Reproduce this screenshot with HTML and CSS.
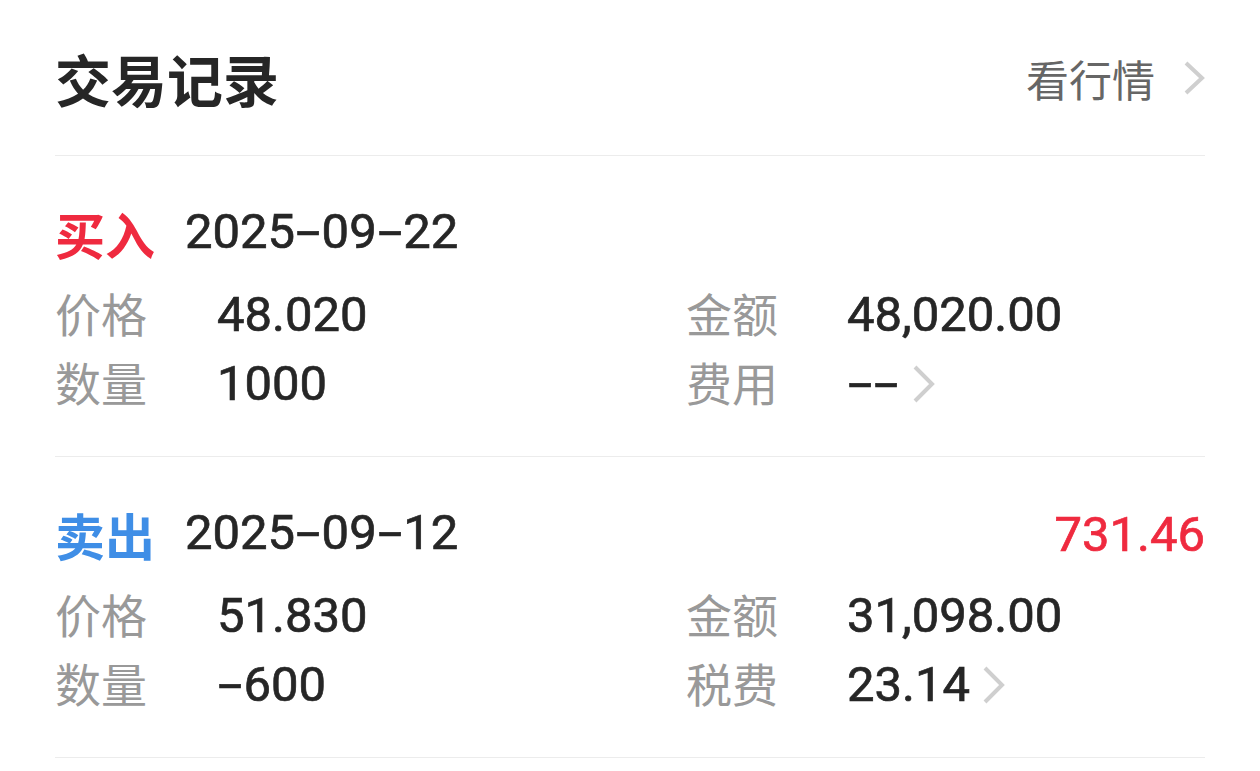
FILE: index.html
```html
<!DOCTYPE html>
<html lang="zh-CN">
<head>
    <meta charset="UTF-8">
    <title>交易记录</title>
    <link rel="stylesheet" href="styles.css">
</head>
<body>
    <div class="page">
        <div class="header">
            <h1 class="title">交易记录</h1>
            <a class="more">看行情
                <svg class="chev chev-head" viewBox="0 0 22 36"><path d="M3 3 L19 18 L3 33" /></svg>
            </a>
        </div>

        <div class="record">
            <div class="record-head">
                <span class="type buy">买入</span>
                <span class="date">2025<span class="dash">-</span>09<span class="dash">-</span>22</span>
            </div>
            <div class="fields">
                <span class="label">价格</span>
                <span class="value">48.020</span>
                <span class="label">金额</span>
                <span class="value">48,020.00</span>
                <span class="label">数量</span>
                <span class="value">1000</span>
                <span class="label">费用</span>
                <span class="value"><span class="dash">-</span><span class="dash">-</span><svg class="chev" viewBox="0 0 24 40"><path d="M3 3 L20 20 L3 37" /></svg></span>
            </div>
        </div>

        <div class="record">
            <div class="record-head">
                <span class="type sell">卖出</span>
                <span class="date">2025<span class="dash">-</span>09<span class="dash">-</span>12</span>
                <span class="profit">731.46</span>
            </div>
            <div class="fields">
                <span class="label">价格</span>
                <span class="value">51.830</span>
                <span class="label">金额</span>
                <span class="value">31,098.00</span>
                <span class="label">数量</span>
                <span class="value"><span class="dash">-</span>600</span>
                <span class="label">税费</span>
                <span class="value">23.14<svg class="chev" viewBox="0 0 24 40"><path d="M3 3 L20 20 L3 37" /></svg></span>
            </div>
        </div>
    </div>
</body>
</html>
```

FILE: styles.css
```css
body {
    margin: 0;
    padding: 0;
    background: #fff;
    font-family: Roboto, "Noto Sans CJK SC", sans-serif;
    color: #262626;
}
.page {
    padding: 0 55px;
}
.header {
    height: 155px;
    border-bottom: 1px solid #ececec;
    display: flex;
    align-items: center;
    justify-content: space-between;
}
.title {
    margin: 0;
    font-family: "Noto Sans CJK SC", sans-serif;
    font-size: 56px;
    font-weight: 700;
    color: #262626;
    line-height: 1;
}
.more {
    display: flex;
    align-items: center;
    font-family: "Noto Sans CJK SC", sans-serif;
    font-size: 43px;
    color: #666;
}
.chev {
    fill: none;
    stroke: #cfcfcf;
    stroke-width: 4;
}
.chev-head {
    width: 22px;
    height: 36px;
    margin-left: 28px;
}
.record {
    padding: 47px 0 38px;
    border-bottom: 1px solid #ececec;
}
.record-head {
    height: 60px;
    display: flex;
    align-items: center;
}
.type {
    font-family: "Noto Sans CJK SC", sans-serif;
    font-size: 50px;
    font-weight: 700;
    width: 130px;
}
.buy {
    color: #ef2a3f;
}
.sell {
    color: #3f8ee6;
}
.date,
.profit,
.value {
    font-size: 49px;
    -webkit-text-stroke: 0.7px currentColor;
}
.date {
    margin-top: -4px;
}
.profit {
    margin-left: auto;
    color: #ef2a3f;
}
.dash {
    display: inline-block;
    width: 0.54em;
    text-align: center;
    transform: scaleX(1.75);
}
.fields {
    margin-top: 17px;
    display: grid;
    grid-template-columns: 162px 469px 161px 1fr;
    grid-auto-rows: 69px;
    align-items: center;
}
.label {
    font-family: "Noto Sans CJK SC", sans-serif;
    font-size: 46px;
    color: #999;
    margin-bottom: 6px;
}
.value {
    color: #262626;
    display: flex;
    align-items: center;
}
.value .chev {
    width: 24px;
    height: 40px;
    margin-left: 12px;
}
```
